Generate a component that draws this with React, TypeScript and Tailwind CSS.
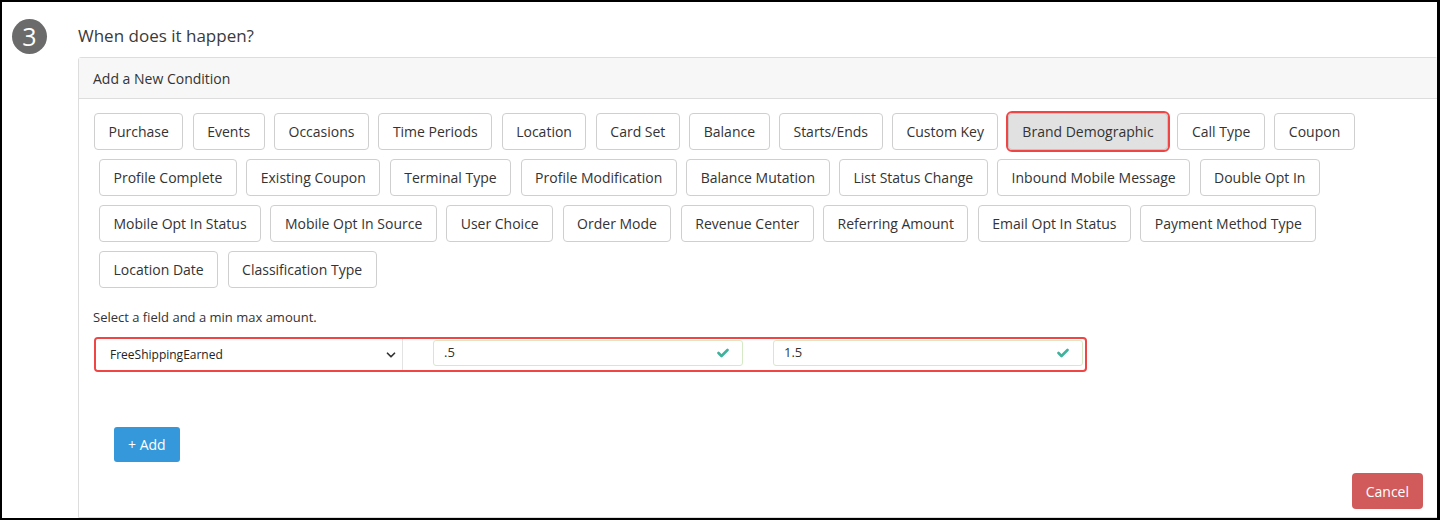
import { ChevronDown } from 'lucide-react';

const rows: string[][] = [
  ['Purchase', 'Events', 'Occasions', 'Time Periods', 'Location', 'Card Set', 'Balance', 'Starts/Ends', 'Custom Key', 'Brand Demographic', 'Call Type', 'Coupon'],
  ['Profile Complete', 'Existing Coupon', 'Terminal Type', 'Profile Modification', 'Balance Mutation', 'List Status Change', 'Inbound Mobile Message', 'Double Opt In'],
  ['Mobile Opt In Status', 'Mobile Opt In Source', 'User Choice', 'Order Mode', 'Revenue Center', 'Referring Amount', 'Email Opt In Status', 'Payment Method Type'],
  ['Location Date', 'Classification Type'],
];

function Check() {
  return (
    <svg width="12" height="10" viewBox="0 0 12 10" className="shrink-0">
      <polyline points="1.5,5 4.5,8 10.5,2" fill="none" stroke="#3fb29c" strokeWidth="2.6" strokeLinecap="round" strokeLinejoin="round" />
    </svg>
  );
}

function AmountInput({ value }: { value: string }) {
  return (
    <div className="flex h-[26px] w-[310px] items-center justify-between rounded-[3px] border border-[#d6e9c6] bg-white pl-[10px] pr-[13px] text-[13px] text-[#333]">
      <span>{value}</span>
      <Check />
    </div>
  );
}

export default function App() {
  return (
    <div className="h-[520px] w-[1440px] overflow-hidden border-2 border-r-[3px] border-black bg-white font-['Open_Sans',sans-serif] text-[#333]">
      <div className="flex h-full">
        <div className="w-[76px] shrink-0 pl-[10px] pt-[17px]">
          <div className="flex h-[35px] w-[35px] items-center justify-center rounded-full bg-[#6b6b6b] text-[25px] leading-none text-white">
            3
          </div>
        </div>
        <div className="flex min-w-0 flex-1 flex-col">
          <div className="h-[55px] pt-[22px] text-[17px] leading-[24px] text-[#3a3a3a]">When does it happen?</div>
          <div className="-mr-px flex flex-1 flex-col rounded-t-[3px] border border-[#ddd]">
            <div className="flex h-[41px] items-center border-b border-[#ddd] bg-[#f7f7f7] px-[14px] text-[14px]">
              Add a New Condition
            </div>
            <div className="flex flex-1 flex-col pt-[14px]">
              <div className="flex flex-col gap-[9px]">
                {rows.map((row, i) => (
                  <div key={i} className={i === 0 ? 'flex gap-[9.4px] pl-[15px]' : 'flex gap-[9.4px] pl-[20px]'}>
                    {row.map((label) => (
                      <button
                        key={label}
                        className={
                          label === 'Brand Demographic'
                            ? 'h-[37px] rounded-[4px] border border-[#c4c4c4] bg-[#e1e1e1] px-[13.5px] text-[14px] text-[#333] outline-2 outline-offset-0 outline-[#ef4545]'
                            : 'h-[37px] rounded-[4px] border border-[#cfcfcf] bg-white px-[13.5px] text-[14px] text-[#333]'
                        }
                      >
                        {label}
                      </button>
                    ))}
                  </div>
                ))}
              </div>
              <div className="mt-[20px] pl-[14px] text-[13px] leading-[18px]">Select a field and a min max amount.</div>
              <div className="ml-[15px] mt-[11px] flex h-[35px] w-[993px] items-start rounded-[4px] border-2 border-[#ef4545]">
                <div className="flex h-full w-[307px] items-center justify-between rounded-l-[3px] border-r border-[#e3e3e3] bg-white pl-[14px] pr-[4px] text-[12px] text-[#222]">
                  <span>FreeShippingEarned</span>
                  <ChevronDown size={14} strokeWidth={3} className="text-[#333]" />
                </div>
                <div className="ml-[30px] mt-px">
                  <AmountInput value=".5" />
                </div>
                <div className="ml-[30px] mt-px">
                  <AmountInput value="1.5" />
                </div>
              </div>
              <div className="ml-[35px] mt-[55px]">
                <button className="h-[35px] rounded-[3px] bg-[#3498db] px-[14px] text-[14px] text-white">+ Add</button>
              </div>
              <div className="mt-[11px] flex justify-end pr-[14px]">
                <button className="h-[36px] rounded-[4px] bg-[#d15b5b] px-[14px] text-[14px] text-white">Cancel</button>
              </div>
            </div>
          </div>
        </div>
      </div>
    </div>
  );
}
